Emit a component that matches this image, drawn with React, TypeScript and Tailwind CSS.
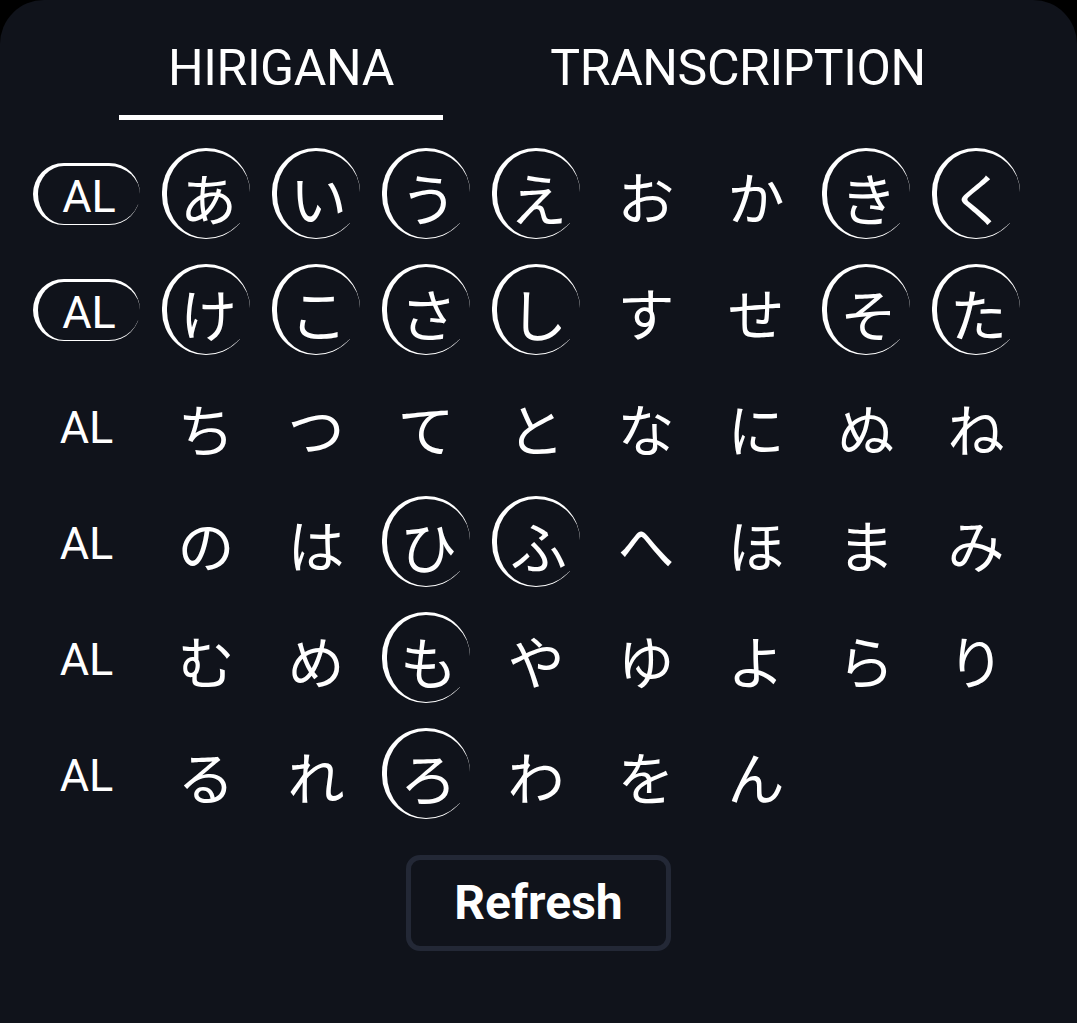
import React, { useState } from 'react';

type Cell = { ch: string; picked?: boolean };

const rows: Cell[][] = [
    [{ ch: 'AL', picked: true }, { ch: 'あ', picked: true }, { ch: 'い', picked: true }, { ch: 'う', picked: true }, { ch: 'え', picked: true }, { ch: 'お' }, { ch: 'か' }, { ch: 'き', picked: true }, { ch: 'く', picked: true }],
    [{ ch: 'AL', picked: true }, { ch: 'け', picked: true }, { ch: 'こ', picked: true }, { ch: 'さ', picked: true }, { ch: 'し', picked: true }, { ch: 'す' }, { ch: 'せ' }, { ch: 'そ', picked: true }, { ch: 'た', picked: true }],
    [{ ch: 'AL' }, { ch: 'ち' }, { ch: 'つ' }, { ch: 'て' }, { ch: 'と' }, { ch: 'な' }, { ch: 'に' }, { ch: 'ぬ' }, { ch: 'ね' }],
    [{ ch: 'AL' }, { ch: 'の' }, { ch: 'は' }, { ch: 'ひ', picked: true }, { ch: 'ふ', picked: true }, { ch: 'へ' }, { ch: 'ほ' }, { ch: 'ま' }, { ch: 'み' }],
    [{ ch: 'AL' }, { ch: 'む' }, { ch: 'め' }, { ch: 'も', picked: true }, { ch: 'や' }, { ch: 'ゆ' }, { ch: 'よ' }, { ch: 'ら' }, { ch: 'り' }],
    [{ ch: 'AL' }, { ch: 'る' }, { ch: 'れ' }, { ch: 'ろ', picked: true }, { ch: 'わ' }, { ch: 'を' }, { ch: 'ん' }],
];

const tabs = ['HIRIGANA', 'TRANSCRIPTION'];

export default function App() {
    const [tab, setTab] = useState(0);

    return (
        <div className="min-h-screen bg-black">
            <div className="min-h-screen bg-[#10131b] rounded-t-[44px] text-white font-['Roboto','Noto_Sans_CJK_JP',sans-serif]">
                {/* tabs */}
                <div className="flex pl-[119px] gap-[58px]">
                    {tabs.map((t, i) => (
                        <button
                            key={t}
                            onClick={() => setTab(i)}
                            className={`flex flex-col items-center pt-[44px] ${i === 0 ? 'w-[324px]' : 'w-[474px]'}`}
                        >
                            <span className="text-[50px] leading-[48px] tracking-[-0.4px]">{t}</span>
                            <span className={`mt-[23px] h-[5px] w-full ${tab === i ? 'bg-white' : 'bg-transparent'}`} />
                        </button>
                    ))}
                </div>

                {/* kana grid */}
                <div className="mt-[28px] ml-[33px] grid grid-cols-[107px_repeat(8,88px)] gap-x-[22px] gap-y-[25px]">
                    {rows.map((row, r) =>
                        row.map((c, k) => {
                            const isAl = k === 0;
                            return (
                                <div key={`${r}-${k}`} className="h-[91px] flex items-center justify-center">
                                    <div
                                        className={`flex items-center justify-center rounded-full border-solid ${isAl ? 'w-[107px] h-[62px] text-[45px] pt-[4px]' : 'w-[88px] h-[91px] text-[57px] pt-[3px] font-["Noto_Sans_CJK_JP",sans-serif]'} ${c.picked ? 'border-white border-l-[5px] border-t-[3px] border-b-[1.5px] border-r-0' : 'border-0'}`}
                                    >
                                        <span className="leading-none">{c.ch}</span>
                                    </div>
                                </div>
                            );
                        })
                    )}
                </div>

                {/* refresh */}
                <div className="flex justify-center mt-[36px]">
                    <button className="w-[265px] h-[96px] border-[5px] border-[#232836] rounded-[14px] text-[48px] font-bold leading-none">
                        Refresh
                    </button>
                </div>
            </div>
        </div>
    );
}
